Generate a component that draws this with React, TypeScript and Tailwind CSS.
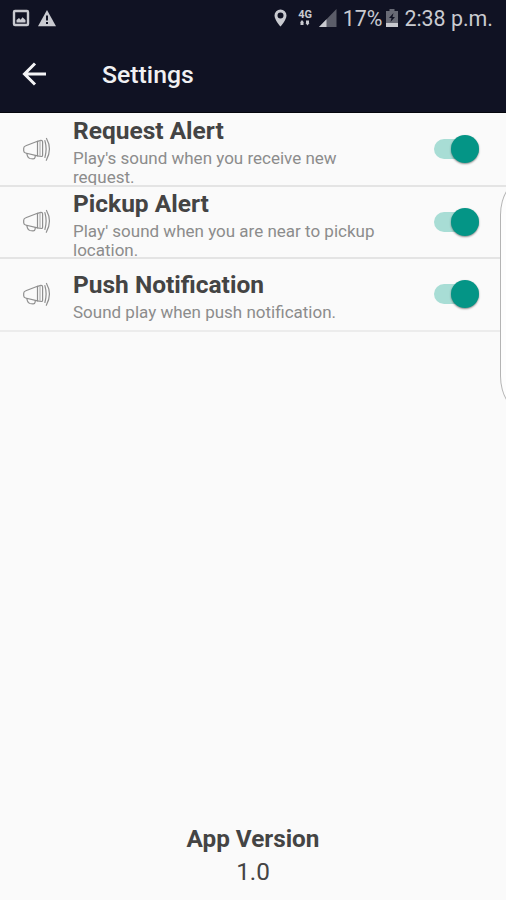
import { useState } from 'react'

type Setting = {
  id: string
  title: string
  lines: string[]
}

const SETTINGS: Setting[] = [
  {
    id: 'request',
    title: 'Request Alert',
    lines: ["Play's sound when you receive new", 'request.'],
  },
  {
    id: 'pickup',
    title: 'Pickup Alert',
    lines: ["Play' sound when you are near to pickup", 'location.'],
  },
  {
    id: 'push',
    title: 'Push Notification',
    lines: ['Sound play when push notification.'],
  },
]

export default function App() {
  return (
    <div className="relative flex h-[900px] w-[506px] flex-col overflow-hidden bg-[#fafafa] font-['Roboto',sans-serif]">
      <header className="flex h-[113px] shrink-0 flex-col border-b border-[#05060d] bg-[#101223]">
        <StatusBar />
        <div className="flex flex-1 items-center pl-[22px]">
          <button type="button" aria-label="Back" className="text-[#f4f4f6]">
            <BackIcon />
          </button>
          <h1 className="ml-[55px] whitespace-nowrap pt-px text-[24.8px] font-medium leading-7 text-[#f0f0f2]">
            Settings
          </h1>
        </div>
      </header>

      <main className="flex flex-1 flex-col pt-px">
        <ul>
          {SETTINGS.map((setting) => (
            <SettingRow key={setting.id} setting={setting} />
          ))}
        </ul>
        <footer className="mt-auto flex flex-col items-center pb-[12px] text-[#444]">
          <p className="text-[24.3px] font-bold leading-[33px]">App Version</p>
          <p className="text-[24.3px] leading-[33px]">1.0</p>
        </footer>
      </main>

      {/* edge panel handle, floats over the list */}
      <div className="absolute top-[179px] left-[500px] h-[233px] w-[48px] rounded-[24px/36px] border border-[#b4b4b4] bg-[#fdfdfd]" />
    </div>
  )
}

function StatusBar() {
  return (
    <div className="flex h-[36px] items-center justify-between pr-[13px] pl-[12px] text-[#c9cad0]">
      <div className="flex items-center gap-[8px]">
        <PictureIcon />
        <WarningIcon />
      </div>
      <div className="flex items-center whitespace-nowrap text-[21.4px] leading-[26px]">
        <PinIcon />
        <NetworkIcon />
        <SignalIcon />
        <span className="ml-[6px] pt-px">17%</span>
        <BatteryIcon />
        <span className="ml-[6px] pt-px">2:38 p.m.</span>
      </div>
    </div>
  )
}

function SettingRow({ setting }: { setting: Setting }) {
  const [on, setOn] = useState(true)

  return (
    <li className="flex h-[72.5px] items-center overflow-hidden border-b-2 border-[#e4e4e4] pr-[27px] pl-[22px] last:border-[#ececec]">
      <MegaphoneIcon />
      <div className={`ml-[22px] flex-1 whitespace-nowrap ${setting.lines.length > 1 ? 'pt-[6px]' : 'pt-[4px]'}`}>
        <h2 className="text-[24.5px] font-bold leading-[28px] text-[#444]">{setting.title}</h2>
        <div className="mt-[4px] text-[17px] leading-[19px] text-[#8c8c8c]">
          {setting.lines.map((line) => (
            <p key={line}>{line}</p>
          ))}
        </div>
      </div>
      <button
        type="button"
        role="switch"
        aria-checked={on}
        aria-label={setting.title}
        onClick={() => setOn(!on)}
        className={`flex h-[20px] w-[45px] items-center rounded-full ${on ? 'justify-end bg-[#a8ddd5]' : 'justify-start bg-[#bdbdbd]'}`}
      >
        <span
          className={`size-[28px] shrink-0 rounded-full shadow-[0_1px_2px_rgba(0,0,0,0.45)] ${on ? 'bg-[#049586]' : 'bg-[#f1f1f1]'}`}
        />
      </button>
    </li>
  )
}

function BackIcon() {
  return (
    <svg width="25" height="24" viewBox="0 0 25 24" fill="none" stroke="currentColor" strokeWidth="3">
      <path d="M24 12H3M13 1.5 2.5 12 13 22.5" />
    </svg>
  )
}

function PictureIcon() {
  return (
    <svg width="18" height="18" viewBox="0 0 18 18" fill="none">
      <rect x="2" y="2" width="14" height="14" rx="1" stroke="currentColor" strokeWidth="2.4" />
      <path d="M4.5 13.5V11L7 9 8.7 10.8 10.5 8.2 13.5 11V13.5Z" fill="currentColor" />
    </svg>
  )
}

function WarningIcon() {
  return (
    <svg width="18" height="18" viewBox="0 0 18 18">
      <path d="M9 1 18 17.2H0Z" fill="currentColor" />
      <path d="M8 6.5h2v5H8zM8 13h2v2H8z" fill="#101223" />
    </svg>
  )
}

function PinIcon() {
  return (
    <svg width="13" height="18" viewBox="0 0 13 18">
      <path
        d="M6.5 0.5A6 6 0 0 0 .5 6.5C.5 11 6.5 17.5 6.5 17.5S12.5 11 12.5 6.5A6 6 0 0 0 6.5.5ZM6.5 3.5A3 3 0 1 1 6.5 9.5 3 3 0 0 1 6.5 3.5Z"
        fill="currentColor"
        fillRule="evenodd"
      />
    </svg>
  )
}

function NetworkIcon() {
  return (
    <span className="ml-[11px] flex w-[15px] flex-col items-center">
      <span className="text-[11px] font-bold leading-[10px]">4G</span>
      <svg width="12" height="6" viewBox="0 0 12 6" fill="currentColor">
        <path d="M3 0 5 2.5H4.5V5H1.5V2.5H1ZM8.5 5.5 10.5 3H10V.5H7V3H6.5Z" />
      </svg>
    </span>
  )
}

function SignalIcon() {
  return (
    <svg width="18" height="18" viewBox="0 0 18 18" className="ml-[6px]">
      <path d="M0 18 17.5 0V18Z" fill="#5b5d69" />
      <path d="M0 18 7.5 10.3V18Z" fill="currentColor" />
    </svg>
  )
}

function BatteryIcon() {
  return (
    <svg width="12" height="18" viewBox="0 0 12 18" className="ml-[4px]">
      <path d="M3.5 0h5v2H12V18H0V2H3.5Z" fill="#686a75" />
      <path d="M0 14H12V18H0Z" fill="currentColor" />
      <path d="M7.5 4 3 9H5.5L4.5 13 9 8H6.5Z" fill="#101223" />
    </svg>
  )
}

function MegaphoneIcon() {
  return (
    <svg
      width="29"
      height="25"
      viewBox="0 0 29 25"
      fill="none"
      stroke="#8f8f8f"
      strokeWidth="1.2"
      strokeLinejoin="round"
      strokeLinecap="round"
    >
      <path d="M1.7 11.3C1.7 9.8 2.3 9.3 3.8 8.8L15.5 4.3V18.8L3.5 16C2.2 15.7 1.7 15 1.7 13.8Z" />
      <path d="M15.5 4.3 18.8 3.4Q20.6 3.2 20.6 5V18Q20.6 19.7 19 19.5L15.5 18.8" />
      <path d="M18 4V19" stroke="#b4b4b4" />
      <path d="M4.8 16.5 5.5 19Q6.2 21.2 8 21.5L11 21.9Q12.8 22 13.2 19.8V18.5" />
      <path d="M22.9 3.6Q25.3 12 22.9 20.5M24.5 1.5Q30.5 12 24.3 23.3" />
    </svg>
  )
}
